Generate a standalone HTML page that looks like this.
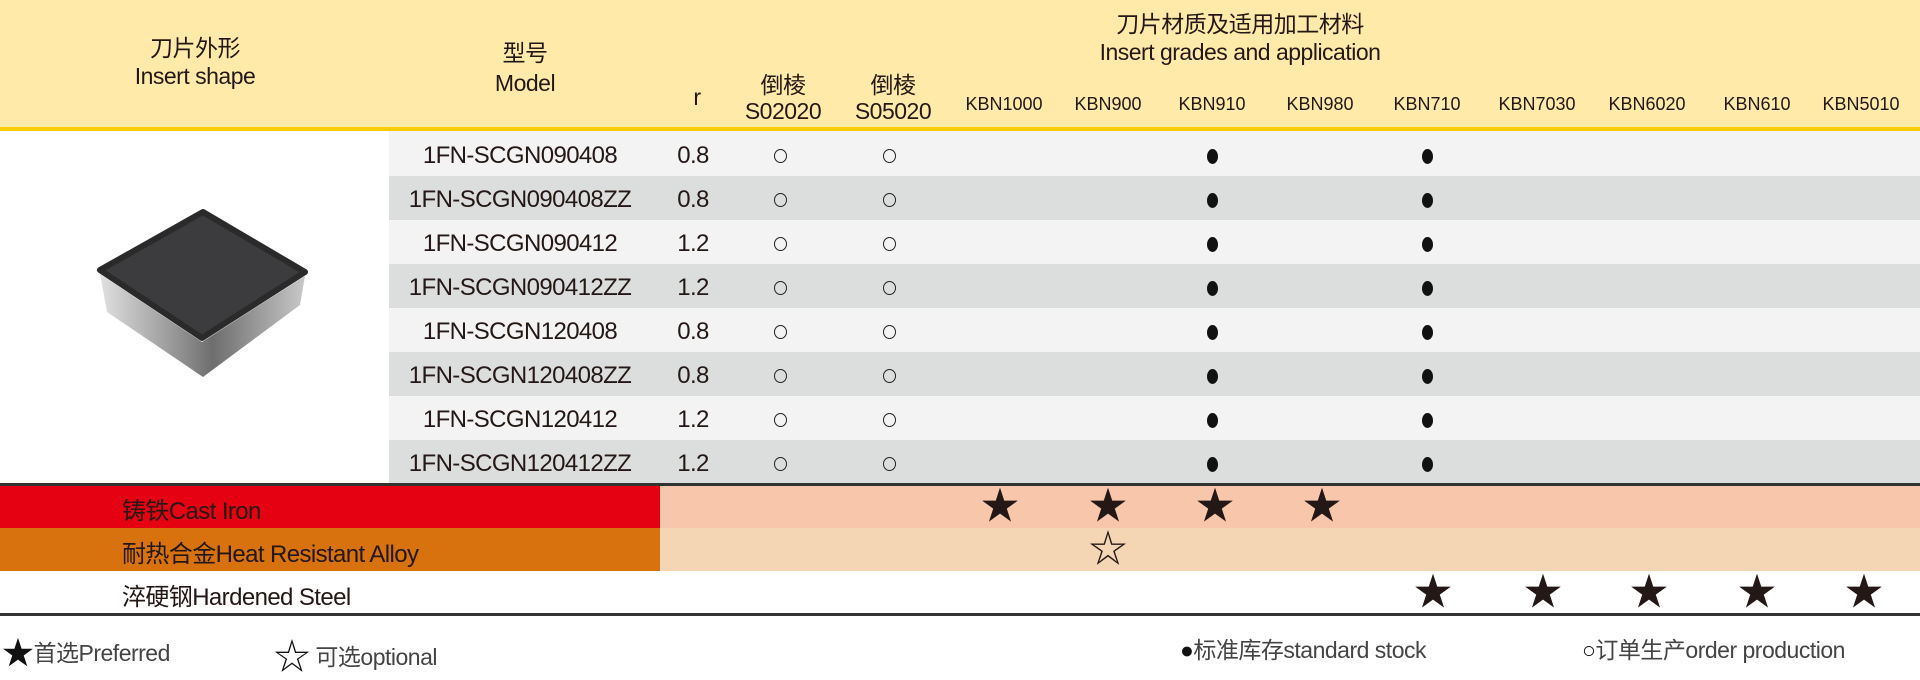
<!DOCTYPE html>
<html><head><meta charset="utf-8"><style>
*{margin:0;padding:0;box-sizing:border-box}
body{width:1920px;height:678px;background:#fff;position:relative;overflow:hidden;font-family:"Liberation Sans","Noto Sans CJK SC",sans-serif;color:#231815}
.a{position:absolute;white-space:nowrap}
.c{transform:translateX(-50%);text-align:center}
.hdr{left:0;top:0;width:1920px;height:128px;background:#ffeaa9}
.yl{left:0;top:127px;width:1920px;height:4px;background:#ffcc00}
.row{left:389px;width:1531px;height:44px}
.t22{font-size:23px;letter-spacing:-0.5px}
.k{font-size:18px;top:94px}
.m{font-size:24px;letter-spacing:-0.6px}
.mat{font-size:24px;letter-spacing:-0.6px;left:122px}
.dot{width:11px;height:15px;border-radius:50%;background:#111}
.ring{width:13px;height:14px;border:1.8px solid #222;border-radius:50%}
.st{font-size:38px;line-height:38px}
.lg{font-size:23px;color:#444;letter-spacing:-0.5px}
</style></head><body>
<div class="a hdr"></div><div class="a yl"></div>
<div class="a c t22" style="left:195px;top:34px;line-height:28px">刀片外形<br>Insert shape</div>
<div class="a c t22" style="left:525px;top:38px;line-height:30px">型号<br>Model</div>
<div class="a c t22" style="left:697px;top:84px">r</div>
<div class="a c t22" style="left:783px;top:72px;line-height:26px">倒棱<br>S02020</div>
<div class="a c t22" style="left:893px;top:72px;line-height:26px">倒棱<br>S05020</div>
<div class="a c t22" style="left:1240px;top:10px;line-height:28px">刀片材质及适用加工材料<br>Insert grades and application</div>
<div class="a c k" style="left:1004px">KBN1000</div>
<div class="a c k" style="left:1108px">KBN900</div>
<div class="a c k" style="left:1212px">KBN910</div>
<div class="a c k" style="left:1320px">KBN980</div>
<div class="a c k" style="left:1427px">KBN710</div>
<div class="a c k" style="left:1537px">KBN7030</div>
<div class="a c k" style="left:1647px">KBN6020</div>
<div class="a c k" style="left:1757px">KBN610</div>
<div class="a c k" style="left:1861px">KBN5010</div>

<div class="a row" style="top:131px;background:#f3f3f3;height:45px"></div>
<div class="a row" style="top:176px;background:#dcdddd"></div>
<div class="a row" style="top:220px;background:#f3f3f3"></div>
<div class="a row" style="top:264px;background:#dcdddd"></div>
<div class="a row" style="top:308px;background:#f3f3f3"></div>
<div class="a row" style="top:352px;background:#dcdddd"></div>
<div class="a row" style="top:396px;background:#f3f3f3"></div>
<div class="a row" style="top:440px;background:#dcdddd"></div>

<svg class="a" style="left:60px;top:180px" width="280" height="220" viewBox="60 180 280 220">
<defs><linearGradient id="g" x1="0" x2="1"><stop offset="0" stop-color="#e0e0e0"/><stop offset=".35" stop-color="#9a9a9a"/><stop offset=".55" stop-color="#6e6e6e"/><stop offset="1" stop-color="#c8c8c8"/></linearGradient></defs>
<polygon points="100,274 202,342 305,276 300,305 203,377 107,312" fill="url(#g)"/>
<polygon points="100,270 203,212 305,272 202,338" fill="#3c3c3e" stroke="#2a2a2a" stroke-width="6" stroke-linejoin="round"/>
</svg>

<div class="a" style="left:0;top:483px;width:1920px;height:3px;background:#333"></div>
<div class="a" style="left:0;top:486px;width:660px;height:42px;background:#e50012"></div>
<div class="a" style="left:660px;top:486px;width:1260px;height:42px;background:#f7c6ab"></div>
<div class="a" style="left:0;top:528px;width:660px;height:43px;background:#d8720f"></div>
<div class="a" style="left:660px;top:528px;width:1260px;height:43px;background:#f4d5b4"></div>
<div class="a" style="left:0;top:613px;width:1920px;height:3px;background:#333"></div>
<div class="a mat" style="top:491px">铸铁Cast Iron</div>
<div class="a mat" style="top:534px">耐热合金Heat Resistant Alloy</div>
<div class="a mat" style="top:577px">淬硬钢Hardened Steel</div>

<div class="a lg" style="left:2px;top:628px"><span style="font-size:32px;color:#111;vertical-align:-3px">★</span>首选Preferred</div>
<div class="a lg" style="left:274px;top:628px"><span style="font-size:36px;color:#111;vertical-align:-4px">☆</span> 可选optional</div>
<div class="a lg" style="left:1180px;top:631px"><span style="color:#111">●</span>标准库存standard stock</div>
<div class="a lg" style="left:1582px;top:631px"><span style="color:#111">○</span>订单生产order production</div>

<div id="rows"></div>
<script>
var models=["1FN-SCGN090408","1FN-SCGN090408ZZ","1FN-SCGN090412","1FN-SCGN090412ZZ","1FN-SCGN120408","1FN-SCGN120408ZZ","1FN-SCGN120412","1FN-SCGN120412ZZ"];
var rs=["0.8","0.8","1.2","1.2","0.8","0.8","1.2","1.2"],h='';
for(var i=0;i<8;i++){var y=156+44*i;
h+='<div class="a c m" style="left:520px;top:'+(y-14)+'px">'+models[i]+'</div>';
h+='<div class="a c m" style="left:693px;top:'+(y-14)+'px">'+rs[i]+'</div>';
h+='<div class="a ring" style="left:774px;top:'+(y-7)+'px"></div>';
h+='<div class="a ring" style="left:883px;top:'+(y-7)+'px"></div>';
h+='<div class="a dot" style="left:1207px;top:'+(y-7)+'px"></div>';
h+='<div class="a dot" style="left:1422px;top:'+(y-7)+'px"></div>';}
[1000,1108,1215,1322].forEach(function(x){h+='<div class="a c st" style="left:'+x+'px;top:488px">★</div>';});
h+='<div class="a c st" style="left:1108px;top:531px">☆</div>';
[1433,1543,1649,1757,1864].forEach(function(x){h+='<div class="a c st" style="left:'+x+'px;top:574px">★</div>';});
document.getElementById('rows').innerHTML=h;
</script>
</body></html>
